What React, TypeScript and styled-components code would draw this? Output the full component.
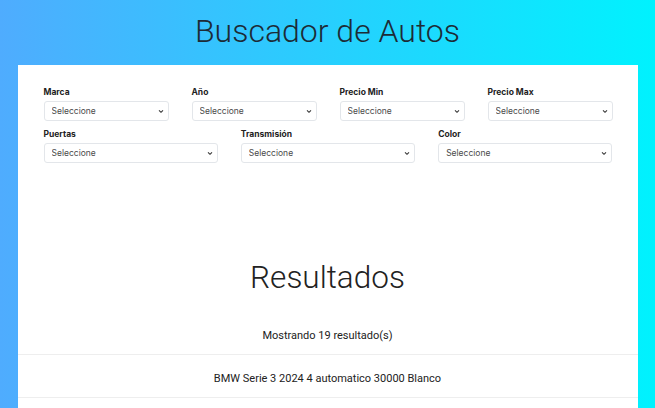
import React from "react";
import styled, { createGlobalStyle } from "styled-components";

const Global = createGlobalStyle`
  html, body { margin: 0; padding: 0; }
  body {
    background: linear-gradient(to right, #4facfe 0%, #00f2fe 100%);
    font-family: Roboto, "Open Sans", sans-serif;
    overflow: hidden;
  }
`;

const Page = styled.div`
  display: flex;
  flex-direction: column;
  align-items: center;
  height: 408px;
  padding: 0 17px;
  box-sizing: border-box;
`;

const Title = styled.h1`
  margin: 0;
  height: 65px;
  line-height: 63px;
  font-family: Roboto, sans-serif;
  font-weight: 300;
  font-size: 32px;
  color: #1d2b36;
  text-align: center;
  flex-shrink: 0;
`;

const Card = styled.div`
  background: #fff;
  width: 620px;
  flex: 1;
  overflow: hidden;
`;

const Filters = styled.div`
  display: flex;
  flex-direction: column;
  gap: 8px;
  padding: 22px 25px 0 26px;
  height: 150px;
  box-sizing: border-box;
`;

const Row = styled.div<{ $cols: number }>`
  display: grid;
  grid-template-columns: repeat(${(p) => p.$cols}, 1fr);
  column-gap: 23px;
`;

const Field = styled.div`
  display: flex;
  flex-direction: column;
  gap: 3px;
`;

const Label = styled.label`
  font-family: Inter, "Open Sans", sans-serif;
  font-weight: 700;
  font-size: 8.5px;
  color: #222;
  line-height: 11px;
`;

const SelectWrap = styled.div`
  position: relative;
  height: 20px;
`;

const Select = styled.select`
  appearance: none;
  -webkit-appearance: none;
  display: block;
  width: 100%;
  height: 20px;
  box-sizing: border-box;
  border: 1px solid #e3e6ea;
  border-radius: 3px;
  background: #fff;
  padding: 0 0 0 7px;
  font-family: Inter, "Open Sans", sans-serif;
  font-size: 8.5px;
  color: #4a4a4a;
  outline: none;
`;

const Chevron = styled.svg`
  position: absolute;
  right: 5px;
  top: 8px;
  width: 6px;
  height: 5px;
  pointer-events: none;
`;

const ResultsTitle = styled.h2`
  margin: 0;
  padding-top: 43px;
  height: 90px;
  box-sizing: border-box;
  font-family: Roboto, sans-serif;
  font-weight: 300;
  font-size: 31.5px;
  line-height: 40px;
  color: #222;
  text-align: center;
`;

const Count = styled.div`
  text-align: center;
  font-family: Roboto, sans-serif;
  font-size: 11px;
  color: #222;
  padding: 24px 0 12px;
  line-height: 13px;
  border-bottom: 1px solid #eeeeee;
`;

const Item = styled.div`
  text-align: center;
  font-family: Roboto, sans-serif;
  font-size: 11px;
  color: #222;
  height: 43px;
  padding-top: 3px;
  line-height: 42px;
  box-sizing: border-box;
  border-bottom: 1px solid #eeeeee;
`;

const Dropdown = ({ label }: { label: string }) => (
  <Field>
    <Label>{label}</Label>
    <SelectWrap>
      <Select defaultValue="">
        <option value="">Seleccione</option>
      </Select>
      <Chevron viewBox="0 0 6 5">
        <path d="M1 1.3 L3 3.3 L5 1.3" fill="none" stroke="#333" strokeWidth="1.1" />
      </Chevron>
    </SelectWrap>
  </Field>
);

export default function App() {
  return (
    <>
      <Global />
      <Page>
        <Title>Buscador de Autos</Title>
        <Card>
          <Filters>
            <Row $cols={4}>
              <Dropdown label="Marca" />
              <Dropdown label="Año" />
              <Dropdown label="Precio Min" />
              <Dropdown label="Precio Max" />
            </Row>
            <Row $cols={3}>
              <Dropdown label="Puertas" />
              <Dropdown label="Transmisión" />
              <Dropdown label="Color" />
            </Row>
          </Filters>
          <ResultsTitle>Resultados</ResultsTitle>
          <Count>Mostrando 19 resultado(s)</Count>
          <Item>BMW Serie 3 2024 4 automatico 30000 Blanco</Item>
        </Card>
      </Page>
    </>
  );
}
